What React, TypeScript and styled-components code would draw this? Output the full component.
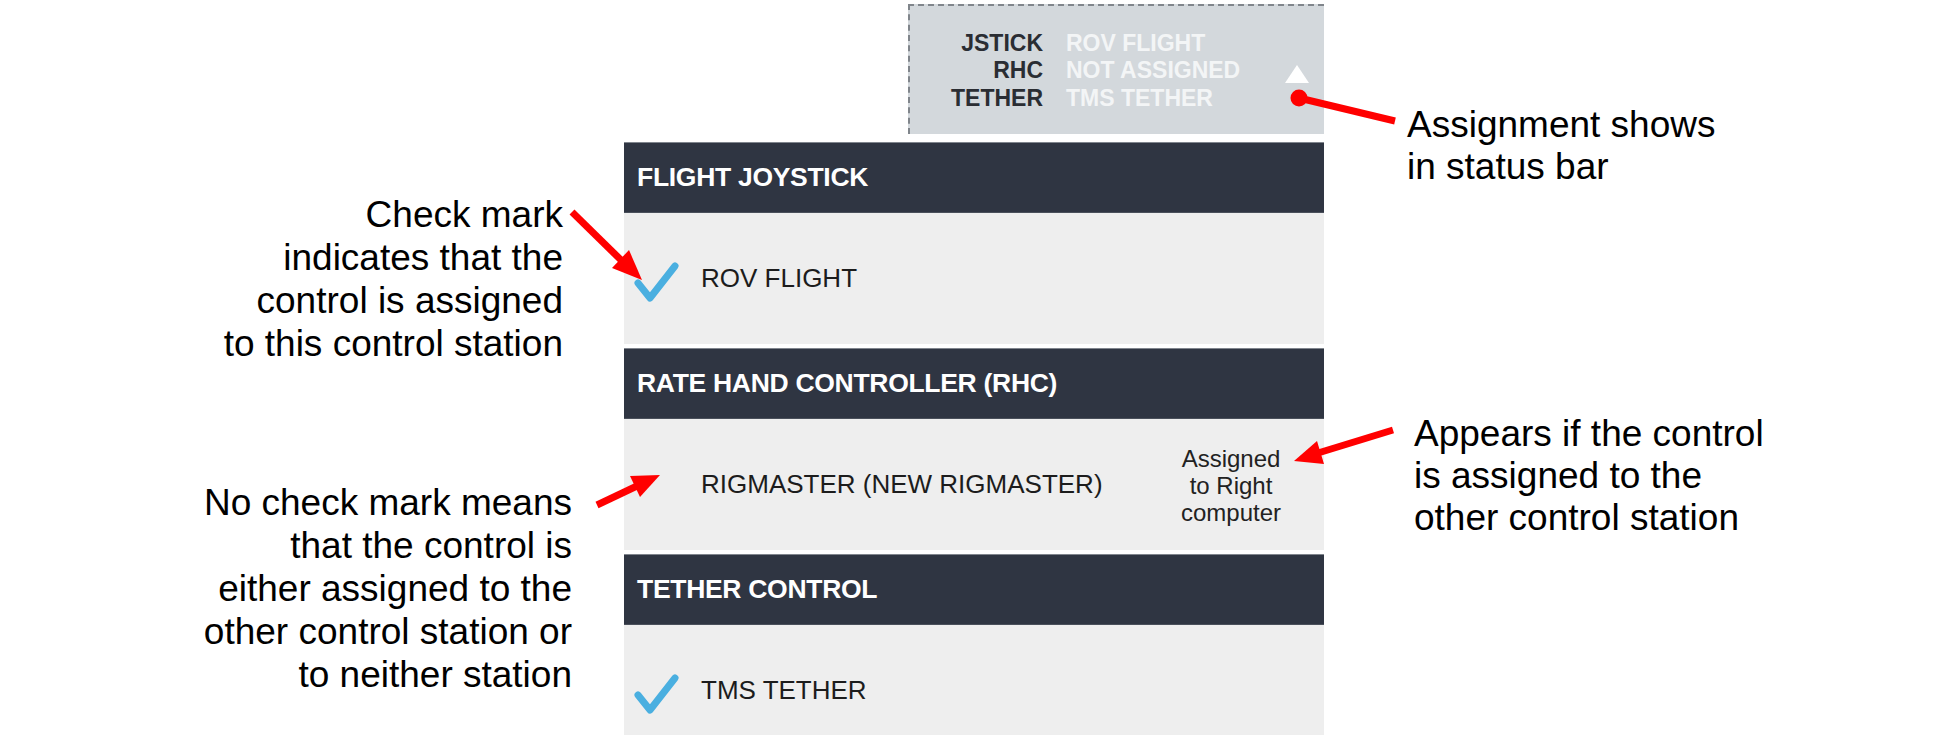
import styled, { createGlobalStyle } from "styled-components";

const GlobalStyle = createGlobalStyle`
  html, body {
    margin: 0;
    padding: 0;
    background: #ffffff;
    overflow: hidden;
  }
  body {
    font-family: "Liberation Sans", Arial, sans-serif;
  }
`;

type Assignment = { label: string; value: string };

const assignments: Assignment[] = [
  { label: "JSTICK", value: "ROV FLIGHT" },
  { label: "RHC", value: "NOT ASSIGNED" },
  { label: "TETHER", value: "TMS TETHER" },
];

type Control = {
  title: string;
  item: string;
  checked: boolean;
  note?: string[];
};

const controls: Control[] = [
  { title: "FLIGHT JOYSTICK", item: "ROV FLIGHT", checked: true },
  {
    title: "RATE HAND CONTROLLER (RHC)",
    item: "RIGMASTER (NEW RIGMASTER)",
    checked: false,
    note: ["Assigned", "to Right", "computer"],
  },
  { title: "TETHER CONTROL", item: "TMS TETHER", checked: true },
];

const CheckMark = () => (
  <svg width="46" height="42" viewBox="0 0 46 42">
    <polyline
      points="4,22 16,37 41,5"
      fill="none"
      stroke="#4aafe0"
      strokeWidth="7"
      strokeLinecap="round"
      strokeLinejoin="round"
    />
  </svg>
);

const UpTriangle = () => (
  <svg width="24" height="18" viewBox="0 0 24 18">
    <polygon points="12,0 24,18 0,18" fill="#ffffff" />
  </svg>
);

const Arrows = () => (
  <ArrowLayer width="1950" height="735" viewBox="0 0 1950 735">
    {/* status bar pointer */}
    <line x1="1299" y1="98" x2="1395" y2="121" stroke="#ff0000" strokeWidth="7" />
    <circle cx="1299" cy="98" r="8.5" fill="#ff0000" />
    {/* check mark pointer */}
    <line x1="572" y1="212" x2="622" y2="261" stroke="#ff0000" strokeWidth="7" />
    <polygon points="642,280 612,268 629,250" fill="#ff0000" />
    {/* no check mark pointer */}
    <line x1="597" y1="505" x2="637" y2="486" stroke="#ff0000" strokeWidth="7" />
    <polygon points="660,475 640,497 630,476" fill="#ff0000" />
    {/* assigned note pointer */}
    <line x1="1393" y1="430" x2="1318" y2="453" stroke="#ff0000" strokeWidth="7" />
    <polygon points="1294,461 1324,464 1317,441" fill="#ff0000" />
  </ArrowLayer>
);

const App = () => {
  return (
    <>
      <GlobalStyle />
      <Page>
        <LeftColumn>
          <Callout $top={193} $inset={61} $align="right">
            Check mark
            <br />
            indicates that the
            <br />
            control is assigned
            <br />
            to this control station
          </Callout>
          <Callout $top={116} $inset={52} $align="right">
            No check mark means
            <br />
            that the control is
            <br />
            either assigned to the
            <br />
            other control station or
            <br />
            to neither station
          </Callout>
        </LeftColumn>

        <Panel>
          <StatusBar>
            <StatusGrid>
              {assignments.map((a) => (
                <StatusEntry key={a.label}>
                  <StatusLabel>{a.label}</StatusLabel>
                  <StatusValue>{a.value}</StatusValue>
                </StatusEntry>
              ))}
            </StatusGrid>
            <Expand>
              <UpTriangle />
            </Expand>
          </StatusBar>

          {controls.map((c) => (
            <Section key={c.title}>
              <SectionHeader>{c.title}</SectionHeader>
              <ControlRow>
                <CheckSlot>{c.checked && <CheckMark />}</CheckSlot>
                <ControlName>{c.item}</ControlName>
                {c.note && (
                  <AssignedNote>
                    {c.note.map((line) => (
                      <div key={line}>{line}</div>
                    ))}
                  </AssignedNote>
                )}
              </ControlRow>
            </Section>
          ))}
        </Panel>

        <RightColumn>
          <Callout $top={104} $inset={83} $align="left" $lineHeight={42}>
            Assignment shows
            <br />
            in status bar
          </Callout>
          <Callout $top={225} $inset={90} $align="left" $lineHeight={42}>
            Appears if the control
            <br />
            is assigned to the
            <br />
            other control station
          </Callout>
        </RightColumn>

        <Arrows />
      </Page>
    </>
  );
};

export default App;

const Page = styled.div`
  position: relative;
  width: 1950px;
  height: 735px;
  overflow: hidden;
  display: flex;
  align-items: flex-start;
  background: #ffffff;
`;

const LeftColumn = styled.div`
  width: 624px;
  flex-shrink: 0;
  display: flex;
  flex-direction: column;
  align-items: flex-end;
`;

const RightColumn = styled.div`
  flex: 1;
  display: flex;
  flex-direction: column;
  align-items: flex-start;
`;

const Callout = styled.div<{
  $top: number;
  $inset: number;
  $align: "left" | "right";
  $lineHeight?: number;
}>`
  margin-top: ${(p) => p.$top}px;
  ${(p) =>
    p.$align === "right"
      ? `margin-right: ${p.$inset}px;`
      : `margin-left: ${p.$inset}px;`}
  text-align: ${(p) => p.$align};
  font-family: "Liberation Sans", Arial, sans-serif;
  font-size: 37px;
  line-height: ${(p) => p.$lineHeight ?? 43}px;
  color: #000000;
  white-space: nowrap;
`;

const Panel = styled.div`
  width: 700px;
  flex-shrink: 0;
  display: flex;
  flex-direction: column;
  gap: 4px;
  padding-top: 4px;
`;

const StatusBar = styled.div`
  flex-shrink: 0;
  align-self: flex-end;
  width: 414px;
  height: 128px;
  margin-bottom: 4px;
  background: #d3d8dc;
  border-top: 2px dashed #80858b;
  border-left: 2px dashed #80858b;
  display: flex;
  align-items: center;
`;

const StatusGrid = styled.div`
  display: flex;
  flex-direction: column;
  margin-top: 2px;
`;

const StatusEntry = styled.div`
  display: grid;
  grid-template-columns: 133px auto;
  column-gap: 23px;
  font-size: 23px;
  font-weight: 700;
  line-height: 27.5px;
  white-space: nowrap;
`;

const StatusLabel = styled.span`
  text-align: right;
  color: #2a2d33;
`;

const StatusValue = styled.span`
  color: #f3f5f6;
`;

const Expand = styled.div`
  margin-left: auto;
  margin-right: 15px;
  margin-top: 8px;
  display: flex;
`;

const Section = styled.div`
  flex-shrink: 0;
  display: flex;
  flex-direction: column;
`;

const SectionHeader = styled.div`
  flex-shrink: 0;
  height: 71px;
  box-sizing: border-box;
  padding-left: 13px;
  display: flex;
  align-items: center;
  background: #2f3542;
  box-shadow: inset 0 1px 0 #80858d, inset 0 -1px 0 #4a505b;
  color: #ffffff;
  font-size: 26.5px;
  font-weight: 700;
  letter-spacing: -0.3px;
  white-space: nowrap;
`;

const ControlRow = styled.div`
  flex-shrink: 0;
  height: 131px;
  box-sizing: border-box;
  padding-left: 10px;
  display: flex;
  align-items: center;
  background: #eeeeee;
`;

const CheckSlot = styled.div`
  width: 66px;
  height: 42px;
  margin-top: 6px;
  display: flex;
  align-items: center;
`;

const ControlName = styled.div`
  font-size: 26px;
  color: #1c1c1c;
  white-space: nowrap;
  margin-left: 1px;
`;

const AssignedNote = styled.div`
  margin-left: auto;
  margin-right: 38px;
  width: 110px;
  text-align: center;
  font-size: 24px;
  line-height: 27px;
  color: #222222;
  margin-top: 2px;
`;

const ArrowLayer = styled.svg`
  position: absolute;
  left: 0;
  top: 0;
  pointer-events: none;
`;
